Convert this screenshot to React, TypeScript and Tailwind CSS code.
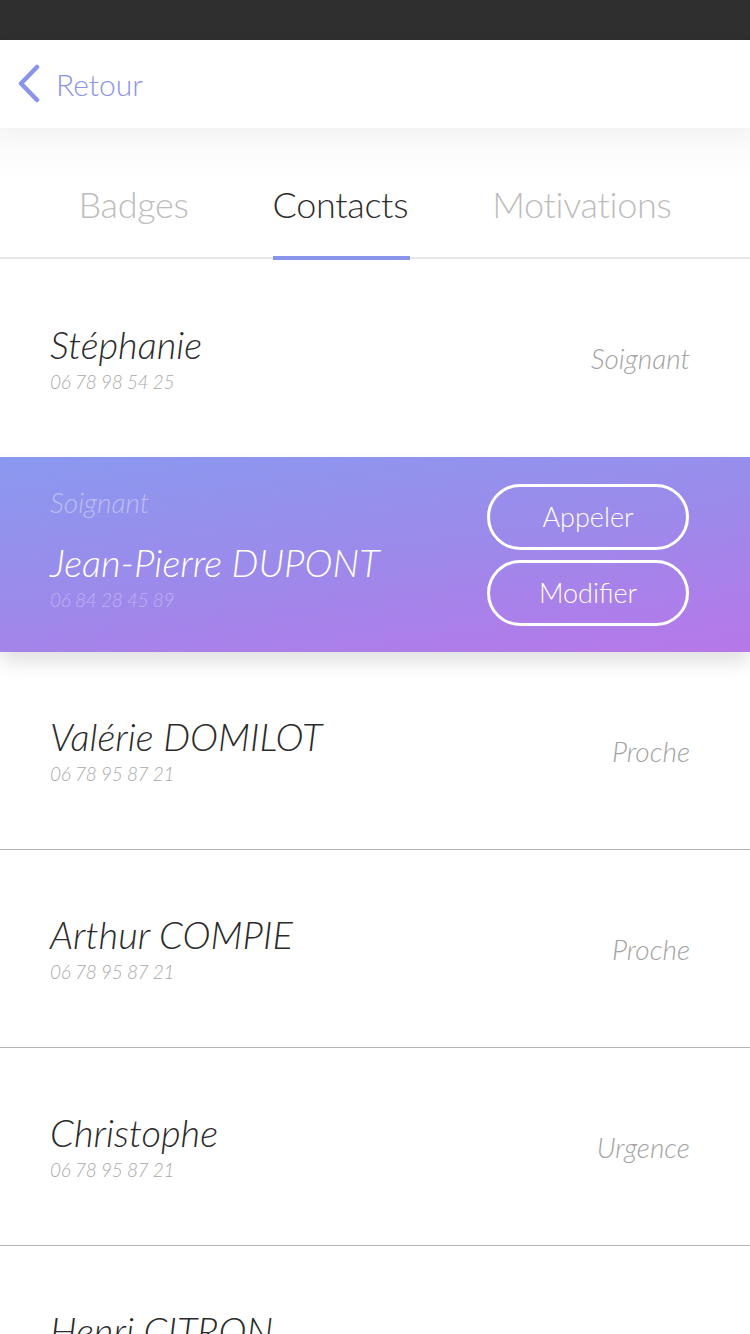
import React from 'react';

interface Contact {
  name: string;
  phone: string;
  role: string;
  active?: boolean;
}

const contacts: Contact[] = [
  { name: 'Stéphanie', phone: '06 78 98 54 25', role: 'Soignant' },
  { name: 'Jean-Pierre DUPONT', phone: '06 84 28 45 89', role: 'Soignant', active: true },
  { name: 'Valérie DOMILOT', phone: '06 78 95 87 21', role: 'Proche' },
  { name: 'Arthur COMPIE', phone: '06 78 95 87 21', role: 'Proche' },
  { name: 'Christophe', phone: '06 78 95 87 21', role: 'Urgence' },
  { name: 'Henri CITRON', phone: '06 78 95 87 21', role: 'Proche' },
];

const tabs = ['Badges', 'Contacts', 'Motivations'];

export default function App() {
  return (
    <div className="w-[750px] h-[1334px] overflow-hidden bg-white font-['Lato',sans-serif]">
      {/* Status bar */}
      <div className="h-[40px] bg-[#2f2f2f]" />

      {/* Header */}
      <div className="relative z-10 h-[88px] bg-white flex items-center pl-[16px] shadow-[0_6px_22px_rgba(0,0,0,0.035)]">
        <svg width="26" height="40" viewBox="0 0 26 40" className="mr-[14px]">
          <path d="M21 3 L5 19.5 L21 36" fill="none" stroke="#8a94ea" strokeWidth="4.5" strokeLinecap="round" strokeLinejoin="round" />
        </svg>
        <span className="text-[30px] leading-none text-[#8a94ea] font-light">Retour</span>
      </div>

      {/* Tabs */}
      <div className="flex justify-center gap-[84px] pt-[54px] border-b-2 border-[#e6e6e6] bg-[linear-gradient(180deg,#f9f9f9,#ffffff_40%)]">
        {tabs.map((tab) => (
          <div key={tab} className="relative pb-[31px]">
            <span className={`block text-[36px] leading-[44px] font-light tracking-[-0.3px] ${tab === 'Contacts' ? 'text-[#2d2d2d]' : 'text-[#bdbdbd]'}`}>
              {tab}
            </span>
            {tab === 'Contacts' && (
              <div className="absolute left-0 right-[-2px] bottom-[-3px] h-[4px] bg-[#8a94ea]" />
            )}
          </div>
        ))}
      </div>

      {/* Contact list */}
      <div>
        {contacts.map((c, i) =>
          c.active ? (
            <div
              key={i}
              className="relative z-10 h-[195px] flex justify-between pl-[50px] pr-[61px] bg-[linear-gradient(172deg,#8a99ef_0%,#9c8aeb_50%,#b777e8_100%)] shadow-[0_10px_18px_rgba(0,0,0,0.12)]"
            >
              <div className="pt-[29px] italic font-light">
                <div className="text-[28px] leading-[32px] text-white/40">{c.role}</div>
                <div className="mt-[23px] text-[38px] leading-[42px] text-white">{c.name}</div>
                <div className="mt-[5px] text-[19px] leading-[24px] text-white/35 tracking-[-0.3px]">{c.phone}</div>
              </div>
              <div className="pt-[27px] flex flex-col gap-[10px]">
                <button className="w-[202px] h-[66px] rounded-full border-[3px] border-white text-white text-[27px] font-light">
                  Appeler
                </button>
                <button className="w-[202px] h-[66px] rounded-full border-[3px] border-white text-white text-[27px] font-light">
                  Modifier
                </button>
              </div>
            </div>
          ) : (
            <div
              key={i}
              className={`h-[198px] flex items-center justify-between pl-[50px] pr-[60px] ${i >= 2 ? 'border-b border-[#b5b5b5]' : ''}`}
            >
              <div className="italic font-light">
                <div className="text-[38px] leading-[42px] text-[#2b2b2b]">{c.name}</div>
                <div className="mt-[5px] text-[19px] leading-[24px] text-[#a9a9a9] tracking-[-0.3px]">{c.phone}</div>
              </div>
              <div className="italic text-[28px] text-[#a3a3a3] font-light">{c.role}</div>
            </div>
          )
        )}
      </div>
    </div>
  );
}
